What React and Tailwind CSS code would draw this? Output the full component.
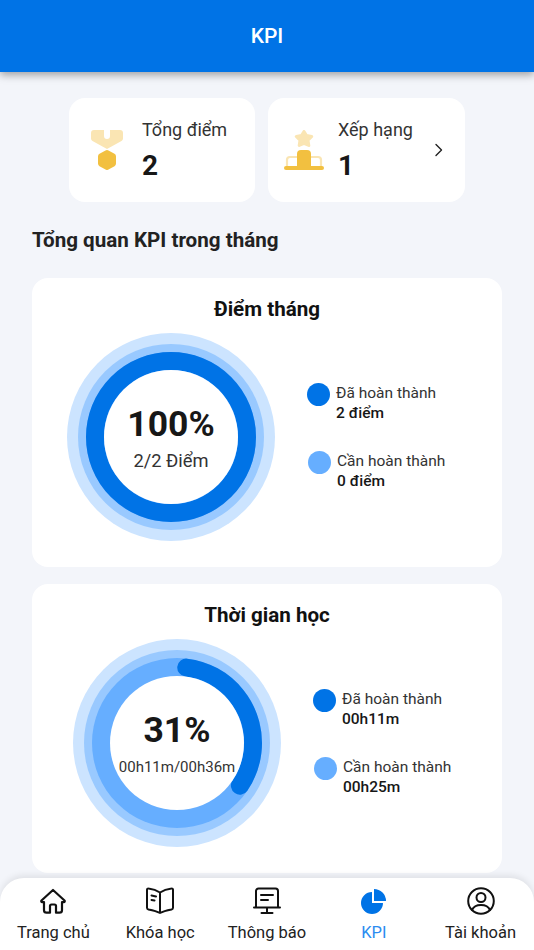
const FONT = "font-['Roboto',sans-serif]";

function Donut({ percent, arc = percent, sub, subSize }) {
  const r = 76;
  const c = 2 * Math.PI * r;
  const full = percent >= 100;
  return (
    <div className="relative w-[208px] h-[208px] shrink-0">
      <svg width="208" height="208" viewBox="0 0 208 208">
        <circle cx="104" cy="104" r="104" fill="#cce4ff" />
        <circle cx="104" cy="104" r="93" fill="#99c9ff" />
        <circle cx="104" cy="104" r="85" fill="#66aeff" />
        <circle
          cx="104"
          cy="104"
          r={r}
          fill="none"
          stroke="#0073e6"
          strokeWidth="18"
          strokeLinecap={full ? "butt" : "round"}
          strokeDasharray={`${(c * arc) / 100} ${c}`}
          transform={`rotate(${full ? -90 : -83} 104 104)`}
        />
        <circle cx="104" cy="104" r="67" fill="#fff" />
      </svg>
      <div className="absolute inset-0 flex flex-col items-center justify-center pt-[3px]">
        <div className="text-[35.5px] leading-[44px] font-bold text-[#171717] mt-[-4px]">{percent}%</div>
        <div className={`${subSize} leading-[22px] text-[#333] mt-[4px]`}>{sub}</div>
      </div>
    </div>
  );
}

function Legend({ color, label, value, className = "" }) {
  return (
    <div className={`flex items-start gap-[6px] ${className}`}>
      <span className="w-[23px] h-[23px] rounded-full shrink-0" style={{ background: color }} />
      <div>
        <div className="text-[15.5px] leading-[20px] text-[#333]">{label}</div>
        <div className="text-[15.5px] leading-[20px] font-medium text-[#171717]">{value}</div>
      </div>
    </div>
  );
}

function Card({ title, children }) {
  return (
    <div className="bg-white rounded-[16px] h-[289px] pt-[17px]">
      <h2 className="text-center text-[20.6px] leading-[28px] font-bold text-[#111]">{title}</h2>
      {children}
    </div>
  );
}

function MedalIcon() {
  return (
    <svg width="32" height="40" viewBox="0 0 32 40">
      <path d="M3 0H13V6A3 3 0 0 0 19 6V0H29A3 3 0 0 1 32 3V8.500A3 3 0 0 1 30.500 11L16 19 1.500 11A3 3 0 0 1 0 8.500V3A3 3 0 0 1 3 0Z" fill="#fae5b3" />
      <path d="M14.500 20.400a3 3 0 0 1 3 0l6 3.400a3 3 0 0 1 1.500 2.600v7.200a3 3 0 0 1-1.500 2.600l-6 3.400a3 3 0 0 1-3 0l-6-3.400a3 3 0 0 1-1.500-2.600v-7.200a3 3 0 0 1 1.500-2.600z" fill="#f2c040" />
    </svg>
  );
}

function PodiumIcon() {
  return (
    <svg width="40" height="40" viewBox="0 0 40 40">
      <path d="M20 1.500 22.500 5.600 27.700 6.500 24 10.300 24.800 15.500 20 13.300 15.200 15.500 16 10.300 12.300 6.500 17.500 5.600Z" fill="#fae5b3" stroke="#fae5b3" strokeWidth="3" strokeLinejoin="round" />
      <path d="M3 37V30a3 3 0 0 1 3-3h8M37 37V30a3 3 0 0 0-3-3h-8" fill="none" stroke="#fae5b3" strokeWidth="2.200" />
      <path d="M13 37V24a4 4 0 0 1 4-4h6a4 4 0 0 1 4 4v13z" fill="#f2c040" />
      <rect x="0" y="36" width="40" height="4" rx="2" fill="#f2c040" />
    </svg>
  );
}

function HomeIcon() {
  return (
    <svg width="28" height="28" viewBox="0 0 28 28" fill="none" stroke="#111" strokeWidth="2.200" strokeLinejoin="round" strokeLinecap="round">
      <path d="M14 3 2.500 13.500a1 1 0 0 0 .7 1.700H5v8a2.500 2.500 0 0 0 2.500 2.500H11V19a1.500 1.500 0 0 1 1.500-1.500h3A1.500 1.500 0 0 1 17 19v6.700h3.500A2.500 2.500 0 0 0 23 23.200v-8h1.800a1 1 0 0 0 .7-1.700z" />
    </svg>
  );
}

function BookIcon() {
  return (
    <svg width="28" height="28" viewBox="0 0 28 28" fill="none" stroke="#111" strokeWidth="2" strokeLinejoin="round" strokeLinecap="round">
      <path d="M14 5.500C11 3.500 7 2 2.500 1.500a1.300 1.300 0 0 0-1.500 1.300v17.900c0 1 .6 1.500 1.500 1.700 4.500.8 8.500 1.800 11.500 3.600 3-1.800 7-2.800 11.500-3.600.9-.2 1.500-.7 1.500-1.700V2.800a1.300 1.300 0 0 0-1.500-1.300C21 2 17 3.500 14 5.500zM14 5.500v20M5.500 8.500l4.500 1M5.500 13l3 .6" />
    </svg>
  );
}

function ScreenIcon() {
  return (
    <svg width="28" height="28" viewBox="0 0 28 28" fill="none" stroke="#111" strokeWidth="2" strokeLinejoin="round" strokeLinecap="round">
      <path d="M3 20V4a2.500 2.500 0 0 1 2.500-2.500h17A2.500 2.500 0 0 1 25 4v16M1 20.500h26M14 21v4.500M8.500 26h11M8 8h12M8 13h7" />
    </svg>
  );
}

function PieIcon() {
  return (
    <svg width="26" height="26" viewBox="0 0 26 26" fill="#0073e6">
      <path d="M11 4V15H22A11 11 0 1 1 11 4Z" />
      <path d="M13 1A12 12 0 0 1 25 13H13Z" />
    </svg>
  );
}

function UserIcon() {
  return (
    <svg width="28" height="28" viewBox="0 0 28 28" fill="none" stroke="#111" strokeWidth="2" strokeLinecap="round">
      <circle cx="14" cy="14" r="12.800" />
      <circle cx="14" cy="10.500" r="4.500" />
      <path d="M5 23c1.500-3.500 5-5 9-5s7.500 1.500 9 5" />
    </svg>
  );
}

const tabs = [
  { label: "Trang chủ", icon: <HomeIcon /> },
  { label: "Khóa học", icon: <BookIcon /> },
  { label: "Thông báo", icon: <ScreenIcon /> },
  { label: "KPI", icon: <PieIcon />, active: true },
  { label: "Tài khoản", icon: <UserIcon /> },
];

export default function App() {
  return (
    <div className={`${FONT} relative w-[534px] h-[950px] overflow-hidden bg-[#f3f5fa] flex flex-col`}>
      {/* Header */}
      <div className="h-[72px] shrink-0 bg-[#0073e6] flex items-center justify-center text-white text-[21px] font-medium pt-[2px] shadow-[0_3px_8px_rgba(0,0,0,0.35)]">
        KPI
      </div>

      {/* Summary cards */}
      <div className="flex justify-center gap-[13px] mt-[26px]">
        <div className="w-[186px] h-[104px] bg-white rounded-[16px] flex items-center pl-[22px]">
          <MedalIcon />
          <div className="ml-[19px]">
            <div className="text-[18px] leading-[24px] text-[#333]">Tổng điểm</div>
            <div className="text-[28px] leading-[32px] font-bold text-[#171717] mt-[8px]">2</div>
          </div>
        </div>
        <div className="w-[197px] h-[104px] bg-white rounded-[16px] flex items-center pl-[16px]">
          <PodiumIcon />
          <div className="ml-[14px]">
            <div className="text-[18px] leading-[24px] text-[#333]">Xếp hạng</div>
            <div className="text-[28px] leading-[32px] font-bold text-[#171717] mt-[8px]">1</div>
          </div>
          <svg className="ml-[22px]" width="8" height="14" viewBox="0 0 8 14" fill="none" stroke="#222" strokeWidth="1.400" strokeLinecap="round" strokeLinejoin="round">
            <path d="M1 1.500 6.500 7 1 12.500" />
          </svg>
        </div>
      </div>

      <h1 className="mt-[24px] ml-[32px] text-[20.6px] leading-[28px] font-bold text-[#222]">Tổng quan KPI trong tháng</h1>

      <div className="mx-[32px] mt-[24px] flex flex-col gap-[17px]">
        <Card title="Điểm tháng">
          <div className="flex items-center mt-[10px] pl-[35px] gap-[32px]">
            <Donut percent={100} sub="2/2 Điểm" subSize="text-[18.3px]" />
            <div className="flex flex-col gap-[28px]">
              <Legend color="#0073e6" label="Đã hoàn thành" value="2 điểm" />
              <Legend color="#66aeff" label="Cần hoàn thành" value="0 điểm" className="ml-[1px]" />
            </div>
          </div>
        </Card>
        <Card title="Thời gian học">
          <div className="flex items-center mt-[10px] pl-[41px] gap-[32px]">
            <Donut percent={31} arc={32.5} sub="00h11m/00h36m" subSize="text-[15px]" />
            <div className="flex flex-col gap-[28px]">
              <Legend color="#0073e6" label="Đã hoàn thành" value="00h11m" />
              <Legend color="#66aeff" label="Cần hoàn thành" value="00h25m" className="ml-[1px]" />
            </div>
          </div>
        </Card>
      </div>

      {/* Tab bar */}
      <div className="absolute left-0 right-0 bottom-0 h-[72px] bg-white rounded-t-[24px] shadow-[0_-3px_6px_rgba(0,0,0,0.08)] grid grid-cols-5 pt-[8px]">
        {tabs.map((tab) => (
          <div key={tab.label} className="flex flex-col items-center">
            <div className="h-[30px] flex items-center">{tab.icon}</div>
            <div className={`text-[16.5px] leading-[20px] mt-[7px] ${tab.active ? "text-[#2b8cf0]" : "text-[#222]"}`}>{tab.label}</div>
          </div>
        ))}
      </div>
    </div>
  );
}
